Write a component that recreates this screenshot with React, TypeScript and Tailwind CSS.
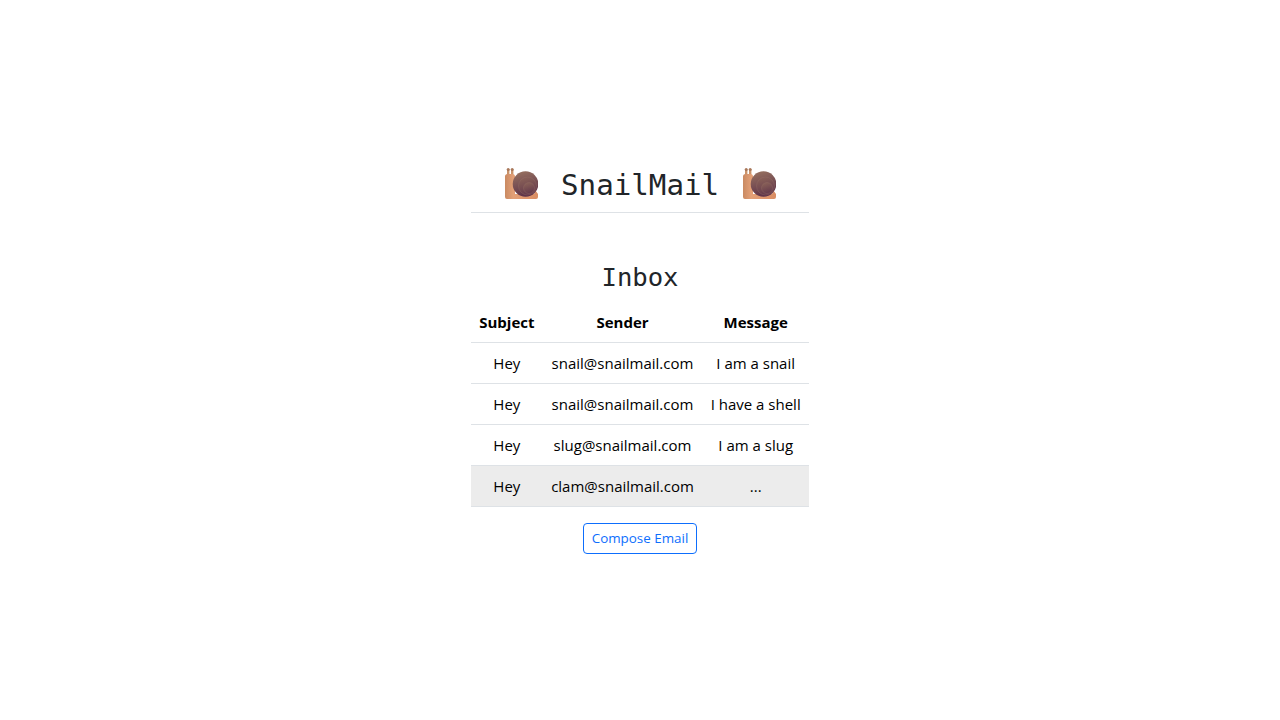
const rows = [
  { subject: 'Hey', sender: 'snail@snailmail.com', message: 'I am a snail' },
  { subject: 'Hey', sender: 'snail@snailmail.com', message: 'I have a shell' },
  { subject: 'Hey', sender: 'slug@snailmail.com', message: 'I am a slug' },
  { subject: 'Hey', sender: 'clam@snailmail.com', message: '...' },
];

const Snail = ({ id }: { id: string }) => (
  <svg width="33" height="31" viewBox="0 0 33 31" className="block shrink-0">
    <defs>
      <linearGradient id={`${id}-body`} x1="0" y1="0" x2="1" y2="0">
        <stop offset="0" stopColor="#c98a62" />
        <stop offset="0.25" stopColor="#e3a077" />
        <stop offset="1" stopColor="#d98d64" />
      </linearGradient>
      <linearGradient id={`${id}-shell`} x1="0.3" y1="0" x2="0.6" y2="1">
        <stop offset="0" stopColor="#96705f" />
        <stop offset="1" stopColor="#5a2f48" />
      </linearGradient>
      <linearGradient id={`${id}-inner`} x1="0.3" y1="0" x2="0.6" y2="1">
        <stop offset="0" stopColor="#8a6258" />
        <stop offset="1" stopColor="#63384b" />
      </linearGradient>
    </defs>
    <rect x="2" y="1" width="2.4" height="7" fill="#c9936a" />
    <rect x="6" y="1" width="2.4" height="7" fill="#c9936a" />
    <circle cx="3.2" cy="1.6" r="1.5" fill="#a8775a" />
    <circle cx="7.2" cy="1.6" r="1.5" fill="#a8775a" />
    <path d="M0 8.5a2.5 2.5 0 0 1 2.5-2.5h5a2.5 2.5 0 0 1 2.5 2.5V26h19l1.5-3.5 2.5 3.5v3a2 2 0 0 1-2 2H2a2 2 0 0 1-2-2z" fill={`url(#${id}-body)`} />
    <circle cx="20.5" cy="16" r="12.8" fill={`url(#${id}-shell)`} />
    <circle cx="22.5" cy="18" r="9" fill={`url(#${id}-inner)`} stroke="#9a7468" strokeOpacity="0.45" strokeWidth="0.7" />
    <circle cx="24" cy="20" r="5.5" fill={`url(#${id}-inner)`} stroke="#9a7468" strokeOpacity="0.45" strokeWidth="0.7" />
  </svg>
);

export default function App() {
  return (
    <div className="min-h-screen bg-white pt-[157px] font-['Open_Sans','Noto_Sans',sans-serif] text-black">
      <div className="mx-auto w-[338px]">
        <div className="flex h-[56px] items-center border-b border-[#dee2e6] pb-[2px] pl-[34px]">
          <Snail id="left" />
          <h1 className="ml-[23px] mr-[25px] mt-[3px] w-[157px] whitespace-nowrap font-['DejaVu_Sans_Mono',monospace] text-[29.2px] leading-[35px] text-[#212529]">SnailMail</h1>
          <Snail id="right" />
        </div>
        <h2 className="mt-[49px] text-center font-['DejaVu_Sans_Mono',monospace] text-[25.6px] leading-[31px] text-[#212529]">Inbox</h2>
        <table className="mt-[9px] w-full border-collapse whitespace-nowrap text-center text-[15px] leading-[24px]">
          <thead>
            <tr className="border-b border-[#dee2e6]">
              <th className="p-2 font-bold">Subject</th>
              <th className="p-2 font-bold">Sender</th>
              <th className="p-2 font-bold">Message</th>
            </tr>
          </thead>
          <tbody>
            {rows.map((row, index) => (
              <tr key={index} className={`border-b border-[#dee2e6] ${index === 3 ? 'bg-[#ececec]' : ''}`}>
                <td className="p-2">{row.subject}</td>
                <td className="p-2">{row.sender}</td>
                <td className="p-2">{row.message}</td>
              </tr>
            ))}
          </tbody>
        </table>
        <div className="mt-4 flex justify-center">
          <button className="h-[31px] w-[114px] rounded border border-[#0d6efd] text-[13.4px] text-[#0d6efd]">Compose Email</button>
        </div>
      </div>
    </div>
  );
}
